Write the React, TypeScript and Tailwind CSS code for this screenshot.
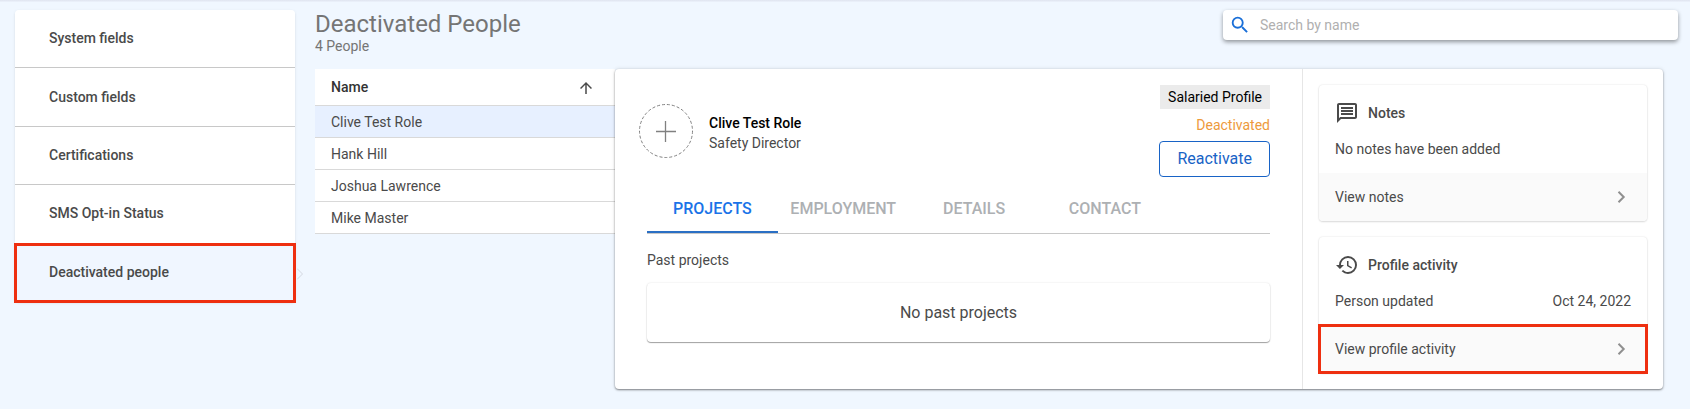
import { MdArrowUpward, MdHistory, MdOutlineMessage, MdSearch } from "react-icons/md";

const sections = ["System fields", "Custom fields", "Certifications", "SMS Opt-in Status", "Deactivated people"];
const people = ["Clive Test Role", "Hank Hill", "Joshua Lawrence", "Mike Master"];
const tabs = ["PROJECTS", "EMPLOYMENT", "DETAILS", "CONTACT"];

function SideNav() {
  return (
    <nav aria-label="Settings" className="w-[280px] shrink-0 rounded-sm shadow-sm">
      <ul className="grid h-[292px] auto-rows-fr">
        {sections.map((label, i) => {
          const active = i === sections.length - 1;
          return (
            <li
              key={label}
              className={
                active
                  ? "relative bg-[#f0f6ff] outline-3 -outline-offset-2 outline-[#ee2f10]"
                  : "border-b border-[#c8c8c8] bg-white first:rounded-t-sm"
              }
            >
              <a
                href="#"
                aria-current={active ? "page" : undefined}
                className="flex h-full items-center px-[34px] text-[14px] font-medium"
              >
                {label}
              </a>
              {active && (
                <svg className="absolute top-6 -right-2 h-3 w-1.5" viewBox="0 0 6 12" fill="none" stroke="#d3d7e0">
                  <path d="M0 0.5L5.5 6L0 11.5" />
                </svg>
              )}
            </li>
          );
        })}
      </ul>
    </nav>
  );
}

function PeopleTable() {
  return (
    <table className="w-[300px] shrink-0 self-start border-collapse text-left text-[14px]">
      <thead>
        <tr className="h-9 border-b border-[#d9d9d9] bg-white">
          <th scope="col" className="px-4 pt-0.5 font-medium text-[#333]">
            <button type="button" className="flex w-full items-center justify-between pr-1">
              Name
              <MdArrowUpward className="size-[18px] text-[#4a4a4a]" />
            </button>
          </th>
        </tr>
      </thead>
      <tbody>
        {people.map((name, i) => (
          <tr key={name} className={i === 0 ? "h-8 border-b border-[#d9d9d9] bg-[#e7f0ff]" : "h-8 border-b border-[#d9d9d9] bg-white"}>
            <td className="px-4 pt-0.5">{name}</td>
          </tr>
        ))}
      </tbody>
    </table>
  );
}

function Profile() {
  return (
    <section className="min-w-0 flex-1 px-8 pt-4">
      <div className="flex justify-between">
        <div className="-ml-2 flex items-center gap-4 self-center">
          <button type="button" aria-label="Add photo" className="text-[#808080]">
            <svg className="size-[54px]" viewBox="0 0 54 54" fill="none" stroke="currentColor">
              <circle cx="27" cy="27" r="26.5" strokeDasharray="3 2" />
              <path d="M17 27.5H37M26.5 17V38" strokeWidth="1.3" />
            </svg>
          </button>
          <div className="pt-1 text-[14px] leading-5">
            <h2 className="font-medium text-black">Clive Test Role</h2>
            <p>Safety Director</p>
          </div>
        </div>
        <div className="flex flex-col items-end">
          <span className="bg-[#ebebeb] px-2 text-[14px] leading-6 text-black">Salaried Profile</span>
          <span className="mt-1 text-[14px] leading-6 text-[#ed9a3c]">Deactivated</span>
          <button type="button" className="mt-1 h-9 rounded-sm border border-[#1863c6] px-[17px] text-[16px] text-[#1863c6]">
            Reactivate
          </button>
        </div>
      </div>
      <div role="tablist" className="mt-2 flex border-b border-[#c8c8c8]">
        {tabs.map((tab, i) => (
          <button
            key={tab}
            type="button"
            role="tab"
            aria-selected={i === 0}
            className={
              i === 0
                ? "h-12 w-[21%] border-b-2 border-[#2a6fc4] pt-0.5 text-[16px] font-medium text-[#1a73e8]"
                : "h-12 w-[21%] border-b-2 border-transparent pt-0.5 text-[16px] font-medium text-[#adb0b3]"
            }
          >
            {tab}
          </button>
        ))}
      </div>
      <h3 className="mt-4 text-[14px] leading-5">Past projects</h3>
      <p className="mt-[13px] mb-8 flex h-[59px] items-center justify-center rounded-sm text-[16px] shadow-[0_1px_1px_rgba(0,0,0,0.35),0_0_2px_rgba(0,0,0,0.12)]">
        No past projects
      </p>
    </section>
  );
}

const card = "rounded-sm shadow-[0_1px_2px_rgba(0,0,0,0.12),0_0_2px_rgba(0,0,0,0.12)]";

function Chevron() {
  return (
    <svg className="size-5" viewBox="0 0 20 20" fill="none" stroke="#8f8f8f" strokeWidth="2" aria-hidden="true">
      <path d="M7.5 4.8L12.7 10L7.5 15.2" />
    </svg>
  );
}

function SideCards() {
  return (
    <aside className="flex w-[361px] shrink-0 flex-col gap-4 border-l border-[#e6e6e6] p-4 text-[14px]">
      <section className={card}>
        <div className="px-4 pt-4">
          <h3 className="flex items-center gap-[9px] font-medium">
            <MdOutlineMessage className="size-6" />
            Notes
          </h3>
          <p className="py-[14px] leading-5">No notes have been added</p>
        </div>
        <a href="#" className="flex h-12 items-center justify-between rounded-b-sm bg-[#fafafa] px-4">
          View notes
          <Chevron />
        </a>
      </section>
      <section className={card}>
        <div className="px-4 pt-4">
          <h3 className="flex items-center gap-[9px] font-medium">
            <MdHistory className="size-6" />
            Profile activity
          </h3>
          <p className="flex justify-between py-[14px] leading-5">
            <span>Person updated</span>
            <time dateTime="2022-10-24">Oct 24, 2022</time>
          </p>
        </div>
        <a href="#" className="flex h-12 items-center justify-between bg-[#fafafa] px-4 outline-3 -outline-offset-2 outline-[#ee2f10]">
          View profile activity
          <Chevron />
        </a>
      </section>
    </aside>
  );
}

export default function App() {
  return (
    <div className="min-h-screen bg-[#f0f7ff] font-[Roboto,sans-serif] text-[#4a4a4a]">
      <div className="h-0.5 bg-linear-to-b from-[#dfe4ef] to-[#edf3fc]" />
      <div className="flex items-start gap-5 px-[15px] pt-2">
        <SideNav />
        <main className="min-w-0 flex-1">
          <header className="-mr-[3px] flex justify-between gap-4 text-[#757575]">
            <div>
              <h1 className="text-[24px] leading-7">Deactivated People</h1>
              <p className="text-[14px] leading-4">4 People</p>
            </div>
            <label className="flex h-[30px] w-[455px] items-center gap-[9px] rounded-sm bg-white pl-1.5 shadow-[0_2px_4px_rgba(0,0,0,0.4)]">
              <MdSearch className="size-[22px] text-[#1a6fd8]" />
              <input
                type="text"
                aria-label="Search by name"
                placeholder="Search by name"
                className="min-w-0 flex-1 bg-transparent text-[14px] outline-none placeholder:text-[#b0b0b0]"
              />
            </label>
          </header>
          <div className="mt-[15px] mr-3 flex">
            <PeopleTable />
            <div className="flex min-w-0 flex-1 rounded-sm bg-white shadow-[0_1px_2px_rgba(0,0,0,0.45),0_0_4px_rgba(0,0,0,0.12)]">
              <Profile />
              <SideCards />
            </div>
          </div>
        </main>
      </div>
    </div>
  );
}
